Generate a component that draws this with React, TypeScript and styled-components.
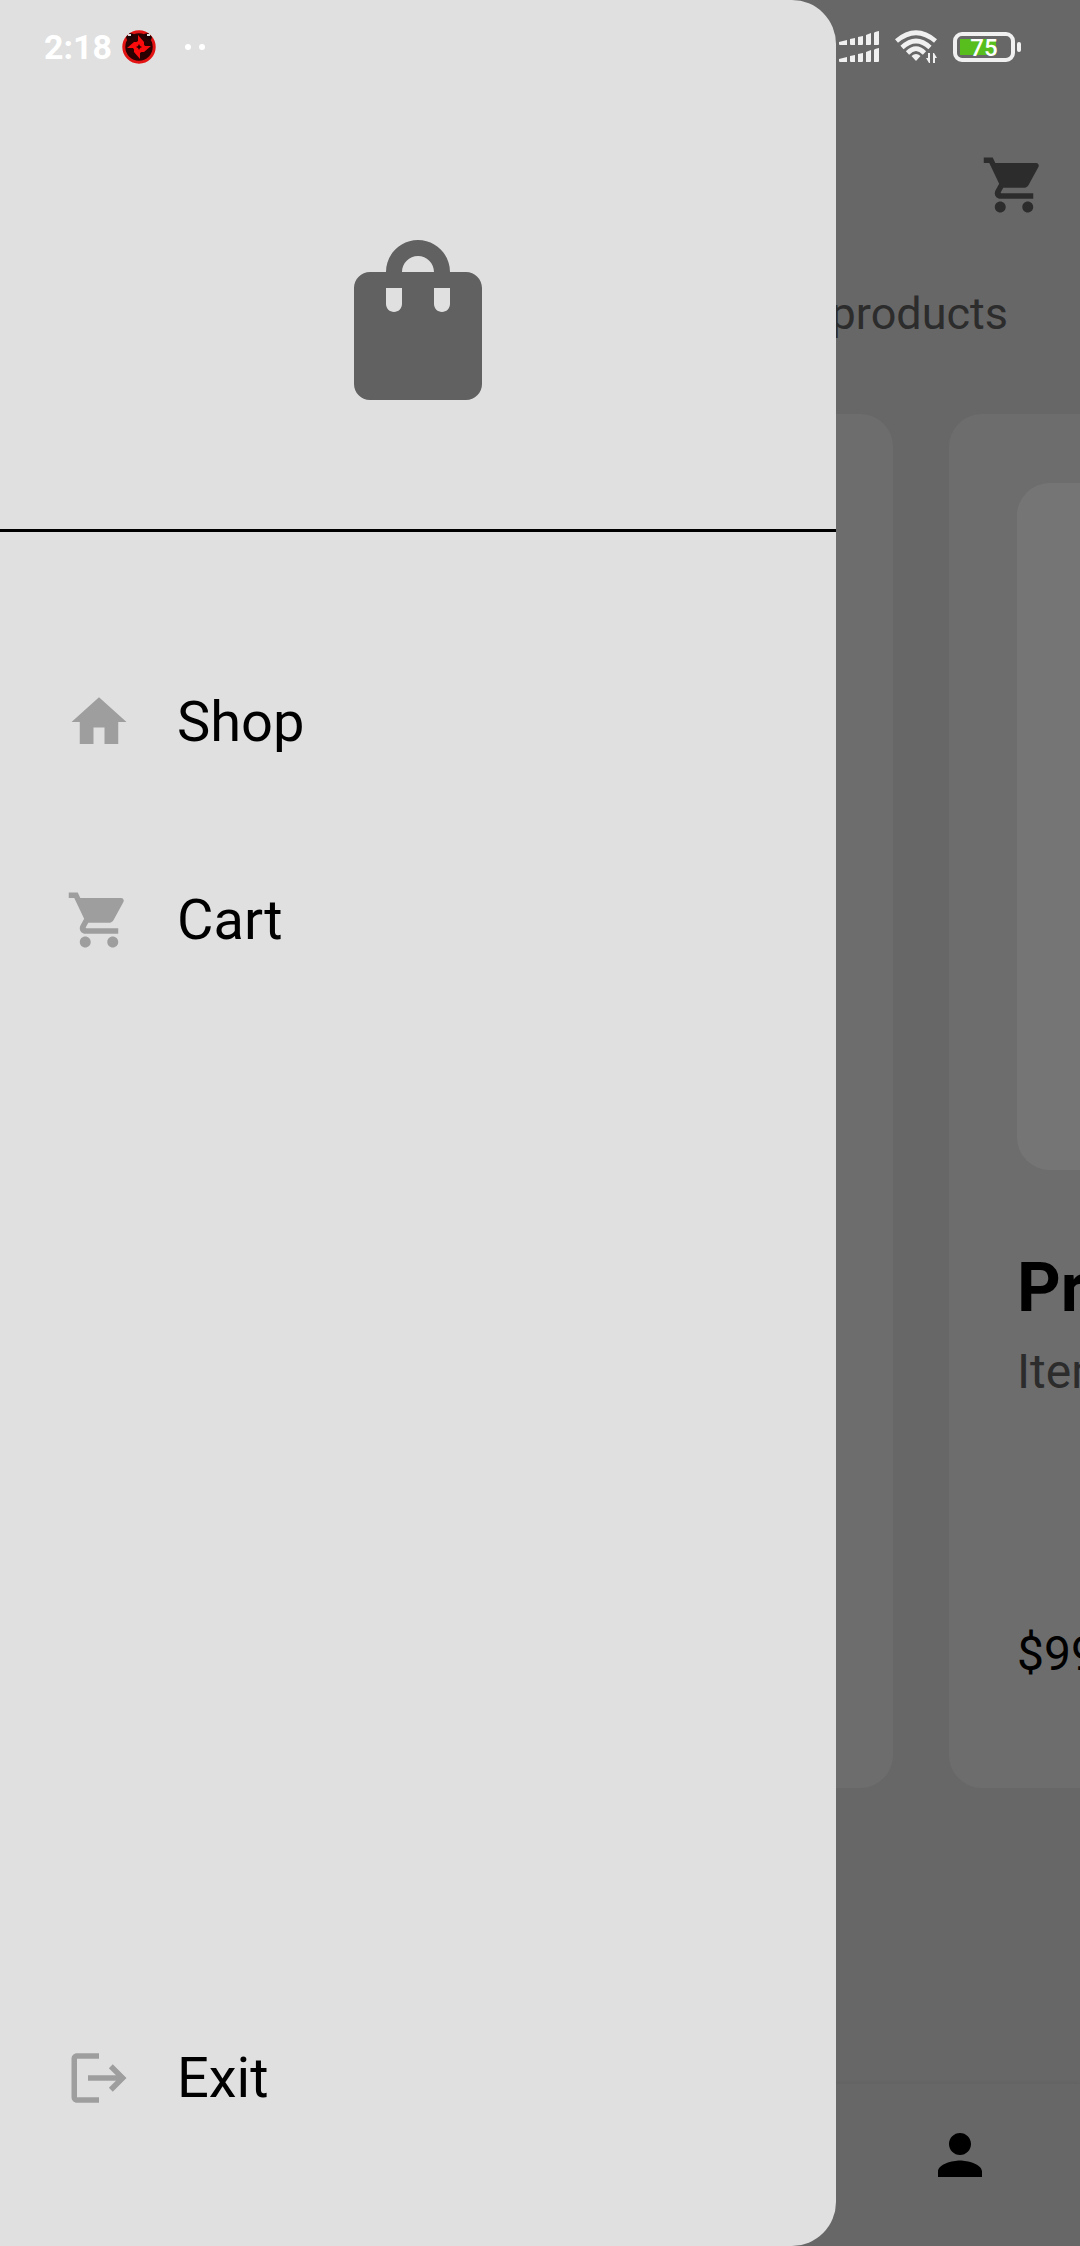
import React from "react";
import styled, { createGlobalStyle } from "styled-components";
import { MdHome, MdLogout, MdPerson, MdShoppingBag, MdShoppingCart } from "react-icons/md";

const GlobalStyle = createGlobalStyle`
  *, *::before, *::after { box-sizing: border-box; }
  body { margin: 0; font-family: Roboto, "Noto Sans", sans-serif; }
  button { border: 0; padding: 0; background: none; color: inherit; font: inherit; cursor: pointer; }
  a { color: inherit; text-decoration: none; }
  h2, p { margin: 0; font-weight: 400; }
  svg { display: block; }
`;

const Screen = styled.div`
  position: relative;
  display: flex;
  flex-direction: column;
  min-height: 100vh;
  overflow: hidden;
  background: #e0e0e0;
`;

const TopBar = styled.header`
  display: flex;
  justify-content: flex-end;
  padding: 152px 33px 0;
  color: #616161;
`;

const IconButton = styled.button<{ $color?: string }>`
  display: flex;
  color: ${(p) => p.$color ?? "inherit"};
`;

const Heading = styled.p`
  padding: 70px 72px 0;
  text-align: right;
  font-size: 45px;
  line-height: 52px;
  color: #616161;
`;

const Cards = styled.main`
  display: flex;
  gap: 56px;
  padding: 74px 0 0 68px;
`;

const Card = styled.article`
  display: flex;
  flex: none;
  flex-direction: column;
  width: 825px;
  min-height: 1374px;
  padding: 69px 68px;
  border-radius: 33px;
  background: #eeeeee;
`;

const Photo = styled.div`
  height: 687px;
  border-radius: 33px;
  background: #ffffff;
`;

const Title = styled.h2`
  margin-top: 78px;
  font-size: 68px;
  line-height: 80px;
  font-weight: 700;
`;

const Subtitle = styled.p`
  margin-top: 16px;
  font-size: 48px;
  line-height: 56px;
  color: #616161;
`;

const Price = styled.p`
  margin-top: 226px;
  font-size: 48px;
  line-height: 56px;
`;

const BottomBar = styled.footer`
  display: flex;
  justify-content: flex-end;
  margin-top: auto;
  padding: 38px 87px 58px;
  background: #e0e0e0;
  box-shadow: 0 -1px 4px rgba(0, 0, 0, 0.06);
`;

const Scrim = styled.div`
  position: absolute;
  inset: 0;
  background: rgba(0, 0, 0, 0.54);
`;

const Drawer = styled.nav`
  position: absolute;
  inset: 0 auto 0 0;
  display: flex;
  flex-direction: column;
  width: 836px;
  max-width: 90%;
  padding-bottom: 69px;
  border-radius: 0 44px 44px 0;
  background: #e0e0e0;
`;

const DrawerHeader = styled.div`
  display: flex;
  justify-content: center;
  padding: 224px 0 113px;
  border-bottom: 3px solid #000;
  margin-bottom: 91px;
  color: #616161;
`;

const DrawerLink = styled.a`
  display: flex;
  align-items: center;
  gap: 45px;
  height: 198px;
  padding: 0 66px;
  font-size: 56px;
  line-height: 66px;
  color: #000;

  svg { color: #9e9e9e; }
`;

const Spacer = styled.div`
  flex: 1;
`;

const StatusBar = styled.div`
  position: absolute;
  inset: 0 0 auto;
  display: flex;
  align-items: center;
  height: 94px;
  padding: 0 59px 0 44px;
  color: #fff;
`;

const Clock = styled.time`
  margin-right: 10px;
  font-size: 34px;
  line-height: 40px;
  font-weight: 700;
`;

const StatusIcons = styled.div`
  display: flex;
  align-items: center;
  gap: 16px;
  margin-left: auto;
`;

const Dots = styled.svg`
  margin-left: 29px;
`;

const Battery = styled.div`
  display: flex;
  align-items: center;
  gap: 2px;

  &::after {
    content: "";
    width: 4px;
    height: 10px;
    border-radius: 2px;
    background: #f0f0f0;
  }
`;

const BatteryCase = styled.div`
  display: flex;
  align-items: center;
  justify-content: center;
  width: 62px;
  height: 30px;
  padding-top: 2px;
  border: 4px solid #f0f0f0;
  border-radius: 9px;
  background: linear-gradient(90deg, #58be1d 36px, transparent 36px) 3px 3px / 48px 16px no-repeat;
  font-size: 24px;
  line-height: 24px;
  font-weight: 500;
`;

const Emblem = () => (
  <svg width="34" height="34" viewBox="0 0 34 34" aria-hidden="true">
    <circle cx="17" cy="17" r="15.2" fill="#2a0000" stroke="#e41313" strokeWidth="3" />
    <path d="M4 7l4-4 4 1-2 4-5 2zM30 7l-4-4-4 1 2 4 5 2z" fill="#1d0000" />
    <path d="M6 4h3v2H6zM25 4h3v2h-3z" fill="#ddd" />
    <g fill="#fb0b0b">
      {[0, 90, 180, 270].map((angle) => (
        <path key={angle} transform={`rotate(${angle} 17 17)`} d="M16 5l6 7v4l-5 1-4-4 3-2z" />
      ))}
    </g>
    <path d="M17 14l1 2 2 1-2 1-1 2-1-2-2-1 2-1z" fill="#2a0000" />
  </svg>
);

const Signal = () => (
  <svg width="41" height="32" viewBox="0 0 41 32" fill="#f0f0f0" aria-hidden="true">
    {[0, 17].map((y) => (
      <g key={y} transform={`translate(1 ${y})`}>
        <path d="M0 11l8-2v5H1q-1 0-1-1zM11 8l5-1v7h-4q-1 0-1-1zM19 6l5-1v8q0 1-1 1h-4zM27 4l5-2v11q0 1-1 1h-4zM35 2q0-1 5-2v13q0 1-1 1h-4z" />
      </g>
    ))}
  </svg>
);

const Wifi = () => (
  <svg width="42" height="34" viewBox="0 0 42 34" aria-hidden="true">
    <g fill="none" stroke="#f0f0f0" strokeWidth="4.600">
      <path d="M1.500 11Q21-5.500 40.500 11" />
      <path d="M7 17.500Q21 4.500 35 17.500" />
      <path d="M12.500 23Q21 14.500 29.500 23" />
    </g>
    <path d="M16.500 26Q21 22 25.500 26L21 31z" fill="#f0f0f0" />
    <path d="M35 23v10h-1l-3-5h2v-5zM38 33V23h1l3 5h-2v5z" fill="#f0f0f0" />
  </svg>
);

const App: React.FC = () => (
  <>
    <GlobalStyle />
    <Screen>
      <TopBar>
        <IconButton aria-label="Open cart">
          <MdShoppingCart size={66} />
        </IconButton>
      </TopBar>
      <Heading>products</Heading>
      <Cards>
        <Card />
        <Card>
          <Photo />
          <Title>Product</Title>
          <Subtitle>Item</Subtitle>
          <Price>$99</Price>
        </Card>
      </Cards>
      <BottomBar>
        <IconButton aria-label="Profile" $color="#000">
          <MdPerson size={66} />
        </IconButton>
      </BottomBar>
      <Scrim />
      <Drawer aria-label="Main menu">
        <DrawerHeader>
          <MdShoppingBag size={192} />
        </DrawerHeader>
        <DrawerLink href="#shop">
          <MdHome size={66} />
          Shop
        </DrawerLink>
        <DrawerLink href="#cart">
          <MdShoppingCart size={66} />
          Cart
        </DrawerLink>
        <Spacer />
        <DrawerLink href="#exit">
          <MdLogout size={66} />
          Exit
        </DrawerLink>
      </Drawer>
      <StatusBar>
        <Clock>2:18</Clock>
        <Emblem />
        <Dots width="20" height="6" viewBox="0 0 20 6" fill="#fff" aria-hidden="true">
          <circle cx="3" cy="3" r="3" />
          <circle cx="17" cy="3" r="3" />
        </Dots>
        <StatusIcons>
          <Signal />
          <Wifi />
          <Battery>
            <BatteryCase>75</BatteryCase>
          </Battery>
        </StatusIcons>
      </StatusBar>
    </Screen>
  </>
);

export default App;
